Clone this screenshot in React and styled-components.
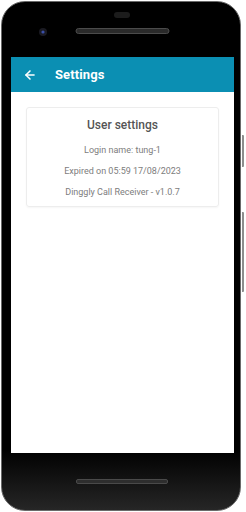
import styled, { createGlobalStyle } from "styled-components"
import { ArrowLeft } from "lucide-react"

const Global = createGlobalStyle`
html, body {
    margin: 0;
    padding: 0;
    background: #fff;
}
body {
    font-family: Roboto, "Liberation Sans", sans-serif;
}
`

const Stage = styled.div`
width: 246px;
height: 512px;
padding: 1px 0 0 1px;
box-sizing: border-box;
`

const Phone = styled.div`
position: relative;
width: 240px;
height: 510px;
box-sizing: border-box;
border: 1.5px solid #6a6a6a;
border-radius: 24px;
background: linear-gradient(#000 0%, #000 88%, #262626 100%);
display: flex;
flex-direction: column;
`

const SideButton = styled.div`
position: absolute;
right: -4px;
top: ${p => p.top}px;
width: 2px;
height: ${p => p.h}px;
background: #8d8d8d;
border-radius: 0 1px 1px 0;
`

const TopBezel = styled.div`
height: 55px;
display: flex;
`

const BottomBezel = styled.div`
flex: 1;
display: flex;
align-items: center;
justify-content: center;
padding-left: 2px;
`

const Grill = styled.div`
width: 90px;
height: 3px;
border-radius: 2px;
background: #2e2e2e;
border: 1px solid #4a4a4a;
`

const Screen = styled.div`
margin: 0 6px 0 9px;
height: 396px;
background: #fff;
display: flex;
flex-direction: column;
`

const Header = styled.div`
height: 35px;
background: #0b8fb3;
display: flex;
align-items: center;
padding-left: 12px;
gap: 18px;
color: #fff;
& span{
    font-size: 13px;
    font-weight: bold;
    letter-spacing: 0.1px;
}
`

const Card = styled.div`
margin: 15px 15px 0 15px;
height: 100px;
box-sizing: border-box;
border: 1px solid #ededed;
border-radius: 3px;
box-shadow: 0 1px 2px rgba(0,0,0,0.04);
display: flex;
flex-direction: column;
align-items: center;
padding-top: 10px;

& .title{
    font-size: 12px;
    font-weight: 500;
    color: #555;
    margin-bottom: 8px;
}
& p{
    margin: 0;
    font-size: 9px;
    color: #7d7d7d;
    line-height: 21px;
}
`

const TopArt = () => (
    <svg width="237" height="55" viewBox="0 0 237 55">
        <rect x="112" y="10" width="16" height="6" rx="3" fill="#1c1c1c" />
        <circle cx="41" cy="30" r="4" fill="#1a1a22" />
        <circle cx="41" cy="30" r="1.6" fill="#3a4fa8" />
        <rect x="74" y="26.5" width="93" height="5" rx="2.5" fill="#2a2a2a" stroke="#4b4b4b" strokeWidth="1" />
    </svg>
)

const App = () => {
    return <Stage>
        <Global />
        <Phone>
            <SideButton top={133} h={32} />
            <SideButton top={210} h={80} />
            <TopBezel>
                <TopArt />
            </TopBezel>
            <Screen>
                <Header>
                    <ArrowLeft size={14} strokeWidth={2.6} />
                    <span>Settings</span>
                </Header>
                <Card>
                    <div className="title">User settings</div>
                    <p>Login name: tung-1</p>
                    <p>Expired on 05:59 17/08/2023</p>
                    <p>Dinggly Call Receiver - v1.0.7</p>
                </Card>
            </Screen>
            <BottomBezel>
                <Grill />
            </BottomBezel>
        </Phone>
    </Stage>
}

export default App
